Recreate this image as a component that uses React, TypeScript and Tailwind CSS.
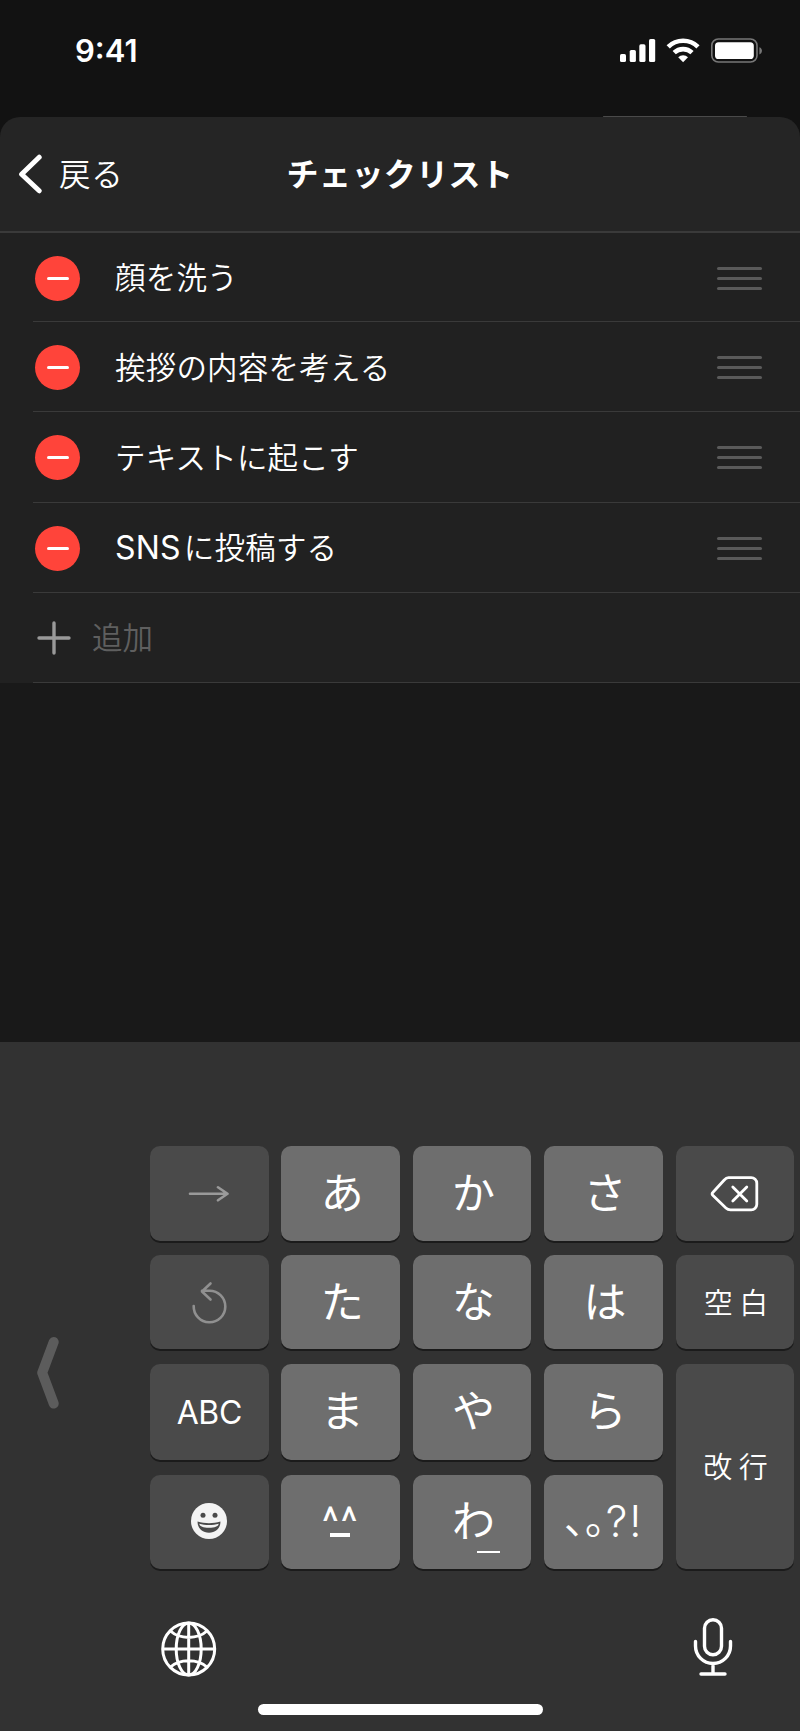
import type { ReactNode } from "react";

const items = ["顔を洗う", "挨拶の内容を考える", "テキストに起こす"];

const StatusBar = () => (
  <div className="flex h-[117px] items-start justify-between bg-[#121212] pl-[75px] pr-[38px]">
    <div className="mt-[31px] text-[31px] leading-[40px] font-semibold">9:41</div>
    <svg className="mt-[36px]" width="144" height="28" viewBox="618 36 144 28" fill="#fff">
      <rect x="620" y="54" width="6" height="8" rx="1.6" />
      <rect x="629.7" y="50" width="6.2" height="12" rx="1.6" />
      <rect x="639.3" y="44.3" width="6.2" height="17.7" rx="1.6" />
      <rect x="649" y="39" width="6.2" height="23" rx="1.6" />
      <g fill="none" stroke="#fff" strokeWidth="4.6">
        <path d="M668.2 46.8a21.3 21.3 0 0 1 29.8 0" />
        <path d="M674.2 52.7a12.8 12.8 0 0 1 17.8 0" />
      </g>
      <path d="M683.1 62.2l-4.9-4.9a7 7 0 0 1 9.8 0z" />
      <rect x="711.8" y="39" width="45.2" height="23" rx="6.5" fill="none" stroke="#777" strokeWidth="1.6" />
      <rect x="715" y="42.2" width="38.8" height="16.8" rx="3.6" />
      <path d="M759.4 47.2v7.2c3.4-1.2 3.4-6 0-7.2z" fill="#777" />
    </svg>
  </div>
);

const Header = () => (
  <div className="relative flex h-[116px] items-center rounded-t-[20px] border-b-2 border-[#3a3a3a] bg-[#252525] pl-[18px]">
    <div className="absolute -top-px left-[603px] h-px w-[144px] rounded-full bg-[#4a4a4a]" />
    <svg width="26" height="40" viewBox="0 0 26 40" fill="none" stroke="#fff" strokeWidth="5" strokeLinecap="round" strokeLinejoin="round">
      <path d="M21.2 3.2L3.6 20.2l17.6 16.6" />
    </svg>
    <div className="mt-[2px] ml-[15px] text-[31.5px] leading-[40px] font-[350] tracking-[0.8px]">戻る</div>
    <div className="absolute inset-x-0 top-[38px] text-center text-[32px] leading-[40px] font-bold tracking-[0.4px]">チェックリスト</div>
  </div>
);

const Row = ({ children }: { children: ReactNode }) => (
  <div className="flex h-[90.2px] items-center pl-[33px] first:h-[89.2px]">
    <div className="flex h-full w-full items-center border-b border-[#3a3a3a] pt-[2px] pl-[2px] pr-[38px]">
      <div className="flex h-[45px] w-[45px] items-center justify-center rounded-full bg-[#ff443a]">
        <div className="h-[3px] w-[22px] rounded-full bg-white" />
      </div>
      <div className="ml-[35px] flex-1 text-[30.5px] leading-[40px] font-[350] tracking-[0.2px]">{children}</div>
      <div className="flex w-[45px] flex-col gap-[7px]">
        <div className="h-[3px] rounded-full bg-[#5a5a5a]" />
        <div className="h-[3px] rounded-full bg-[#5a5a5a]" />
        <div className="h-[3px] rounded-full bg-[#5a5a5a]" />
      </div>
    </div>
  </div>
);

const Key = ({ light, tall, className = "", children }: { light?: boolean; tall?: boolean; className?: string; children: ReactNode }) => (
  <div
    className={`flex items-center justify-center rounded-[10px] shadow-[0_2px_0_#1b1b1b] ${light ? "bg-[#6e6e6e] text-[43px]" : "bg-[#4a4a4a]"} ${tall ? "row-span-2" : ""} ${className}`}
  >
    {children}
  </div>
);

const Kana = ({ children }: { children: string }) => (
  <Key light>
    <span className="ml-[3px] leading-none">{children}</span>
  </Key>
);

const Keyboard = () => (
  <div className="flex h-[689px] flex-col bg-[#323232]">
    <div className="flex pt-[104.4px]">
      <div className="flex w-[150px] items-center pl-[37px]">
        <svg className="mt-[31px]" width="24" height="74" viewBox="0 0 24 74" fill="none" stroke="#5c5c5c" strokeWidth="10" strokeLinecap="round" strokeLinejoin="round">
          <path d="M16.7 6L5.2 36.8 16.7 67.6" />
        </svg>
      </div>
      <div className="grid grid-cols-[repeat(5,118.6px)] grid-rows-[94.2px_94.2px_96px_94.4px] gap-x-[12.8px] gap-y-[14.6px]">
        <Key>
          <svg width="42" height="18" viewBox="0 0 42 18" fill="none" stroke="#9a9a9a" strokeWidth="2.6" strokeLinecap="round" strokeLinejoin="round">
            <path d="M2 9.8h37M30 3.3l9.5 6.5-9.5 6.5" />
          </svg>
        </Key>
        <Kana>あ</Kana>
        <Kana>か</Kana>
        <Kana>さ</Kana>
        <Key className="pt-[2px]">
          <svg width="50" height="38" viewBox="0 0 50 38" fill="none" stroke="#fff" strokeWidth="2.8" strokeLinecap="round" strokeLinejoin="round">
            <path d="M18.5 2.6h22.7a5.6 5.6 0 0 1 5.6 5.6v21a5.6 5.6 0 0 1-5.6 5.6H20.5c-2 0-3.3-.6-4.6-1.8L3 20.6c-1.1-1.1-1.1-2.3 0-3.400L14 5.200c1.500-1.700 2.700-2.600 4.500-2.600z" />
            <path d="M22.8 12l14 14M36.8 12l-14 14" />
          </svg>
        </Key>

        <Key>
          <svg width="40" height="44" viewBox="0 0 40 44" fill="none" stroke="#909090" strokeWidth="2.6" strokeLinecap="round" strokeLinejoin="round">
            <path d="M4.7 26a15.8 15.8 0 1 0 15.8-15.3h-7.5M21.5 3.5l-8.5 8 8.5 8" />
          </svg>
        </Key>
        <Kana>た</Kana>
        <Kana>な</Kana>
        <Kana>は</Kana>
        <Key className="pt-[2px] pl-[9px] text-[29px] font-[350] tracking-[6.5px]">空白</Key>

        <Key className="pt-[2px] text-[32px] tracking-[-0.4px]">ABC</Key>
        <Kana>ま</Kana>
        <Kana>や</Kana>
        <Kana>ら</Kana>
        <Key tall className="pt-[2px] pl-[8px] text-[29px] font-[350] tracking-[6.5px]">改行</Key>

        <Key>
          <svg width="36" height="38" viewBox="0 0 36 38">
            <circle cx="18" cy="18" r="18" fill="#f3f3f3" />
            <circle cx="12" cy="12.3" r="2.5" fill="#4a4a4a" />
            <circle cx="24" cy="12.3" r="2.5" fill="#4a4a4a" />
            <path d="M6.6 18.5c7 2.200 15.800 2.200 22.800 0 .4 6-4.500 11.300-11.400 11.300S6.200 24.500 6.600 18.500z" fill="#4a4a4a" />
            <path d="M8.2 20.7c6 1.700 13.600 1.700 19.600 0-.8 2.800-3.500 4-9.800 4s-9-1.200-9.800-4z" fill="#f3f3f3" />
          </svg>
        </Key>
        <Key light>
          <div className="flex flex-col items-center pt-px pr-[2px]">
            <span className="pl-[2px] font-[Roboto] text-[40px] leading-[30px] tracking-[2px]">^^</span>
            <div className="-mt-[5px] h-[4px] w-[20px] bg-white" />
          </div>
        </Key>
        <Key light className="relative">
          <span className="ml-[3px] leading-none">わ</span>
          <div className="absolute bottom-[16px] left-[64px] h-[2px] w-[23px] bg-white" />
        </Key>
        <Key light>
          <div className="flex items-baseline leading-none">
            <span className="-translate-y-[3px] text-[42px] font-[350] [font-feature-settings:'halt']">、。</span>
            <span className="text-[43px] font-light tracking-[2px]">?!</span>
          </div>
        </Key>
      </div>
    </div>

    <div className="mt-[45px] flex justify-between pl-[160px] pr-[66px]">
      <svg className="mt-[6px]" width="58" height="58" viewBox="0 0 58 58" fill="none" stroke="#fff" strokeWidth="3">
        <circle cx="28.7" cy="29" r="26" />
        <ellipse cx="28.7" cy="29" rx="12.5" ry="26" />
        <path d="M28.7 3v52M2.7 29h52M10.5 11c9 8.500 27.400 8.500 36.400 0M10.500 47c9-8.500 27.400-8.500 36.400 0" />
      </svg>
      <svg width="42" height="64" viewBox="0 0 42 64" fill="none" stroke="#fff" strokeWidth="3.4" strokeLinecap="round">
        <rect x="12.5" y="5.7" width="17" height="35" rx="8.5" />
        <path d="M3.5 27.5v4.500a17.500 17.500 0 0 0 35 0v-4.500M21 50v10M9 60h24" />
      </svg>
    </div>
    <div className="mx-auto mt-auto mb-[16px] h-[11px] w-[285px] rounded-full bg-white" />
  </div>
);

export default function App() {
  return (
    <div className="flex h-[1731px] w-[800px] flex-col overflow-hidden bg-[#121212] font-['Inter','Noto_Sans_CJK_JP',sans-serif] text-white">
      <StatusBar />
      <Header />
      <div className="flex-1 bg-[#191919]">
        <div className="bg-[#212121]">
          {items.map((label) => (
            <Row key={label}>{label}</Row>
          ))}
          <Row>
            <span className="mr-[3px] text-[32px] font-normal">SNS</span>に投稿する
          </Row>
          <div className="flex h-[90.2px] pl-[33px]">
            <div className="flex w-full items-center border-b border-[#3a3a3a] pt-[2px] pl-[4px]">
              <svg width="34" height="34" viewBox="0 0 34 34" stroke="#999" strokeWidth="3.4" strokeLinecap="round">
                <path d="M17 2v30M2 17h30" />
              </svg>
              <div className="ml-[21px] text-[30.5px] leading-[40px] font-[350] text-[#5f5f5f]">追加</div>
            </div>
          </div>
        </div>
      </div>
      <Keyboard />
    </div>
  );
}
